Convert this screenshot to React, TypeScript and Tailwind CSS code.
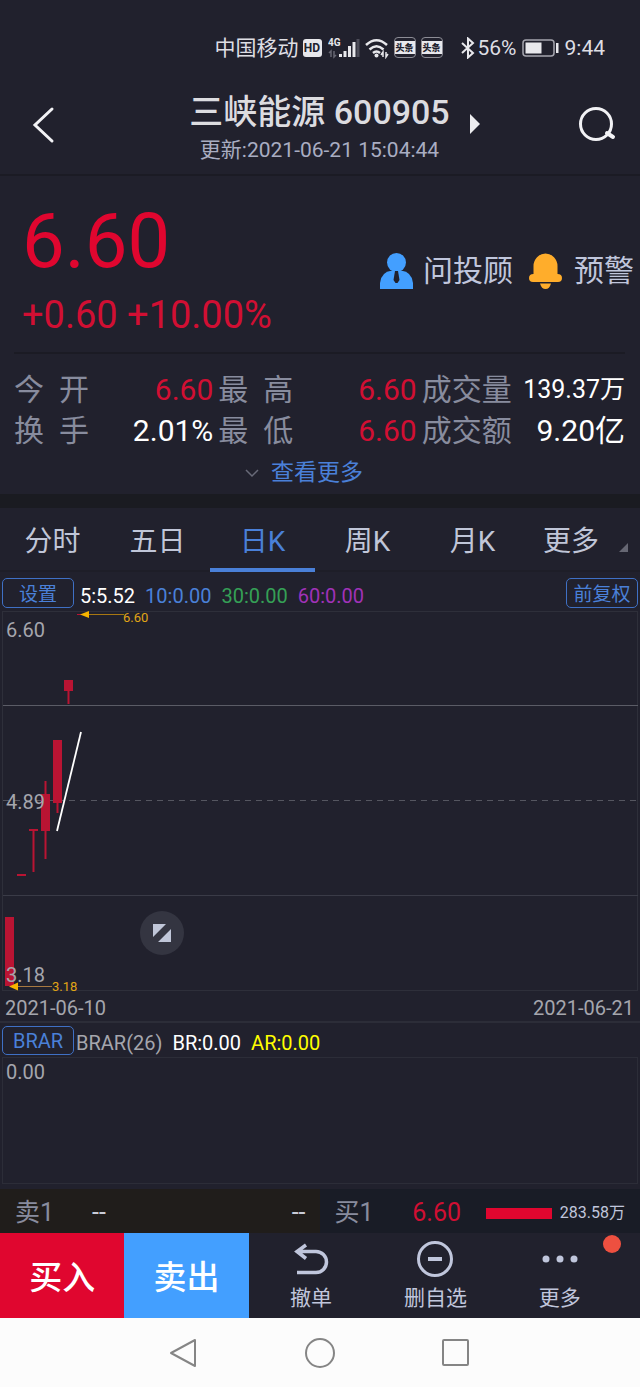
/**
 * Stock Detail Page
 *
 * Quote header, daily K-line chart and order bar for a single stock
 */

import { useState } from 'react';

const TABS = ['分时', '五日', '日K', '周K', '月K', '更多'];

const STATS = [
  { label: ['今', '开'], value: '6.60', color: 'text-[#d10f33]' },
  { label: ['最', '高'], value: '6.60', color: 'text-[#d10f33]' },
  { label: ['成', '交', '量'], value: '139.37万', color: 'text-white', small: true },
  { label: ['换', '手'], value: '2.01%', color: 'text-white' },
  { label: ['最', '低'], value: '6.60', color: 'text-[#d10f33]' },
  { label: ['成', '交', '额'], value: '9.20亿', color: 'text-white' },
];

// body and wick positions, top to bottom in chart pixels
const CANDLES = [
  { x: 5, top: 306, bottom: 375, high: 306, low: 375 },
  { x: 17, top: 263, bottom: 265, high: 263, low: 265 },
  { x: 29, top: 218, bottom: 220, high: 218, low: 261 },
  { x: 41, top: 183, bottom: 220, high: 170, low: 248 },
  { x: 53, top: 129, bottom: 192, high: 129, low: 202 },
  { x: 64, top: 69, bottom: 80, high: 69, low: 93 },
];

function StatusBar() {
  return (
    <div className="flex h-[94px] items-center justify-end pt-px pr-[35px] text-[21px] leading-6 text-[#dedee4]">
      <span>中国移动</span>
      <span className="ml-1 flex h-[18px] w-[19px] items-center justify-center rounded-[3px] bg-[#e8e8ec] text-[12px] font-bold text-[#21212d]">
        HD
      </span>
      <svg className="ml-[6px]" width="32" height="22" viewBox="0 0 32 22" aria-hidden="true">
        <text x="0" y="9" fontSize="10" fontWeight="700" fill="#e8e8ec">
          4G
        </text>
        <path d="M3 20v-6l-2 2M6 14v6l2-2" stroke="#666672" strokeWidth="1.5" fill="none" />
        <path d="M12.500 20v-3M17 20v-6M21.500 20v-11M26 20V5" stroke="#e8e8ec" strokeWidth="3" />
        <path d="M30 20V2" stroke="#4d4d59" strokeWidth="3" />
      </svg>
      <svg className="ml-[5px]" width="24" height="22" viewBox="0 0 24 22" fill="none" stroke="#e8e8ec" strokeWidth="2.500" aria-hidden="true">
        <path d="M1 8q10.500-9.500 21 0M4.500 12.500q7-6.500 14 0M8 16q3.500-3 7 0" />
        <circle cx="11.500" cy="18.500" r="2" fill="#e8e8ec" stroke="none" />
        <path d="M18 20v-5l-2 3M21 15v5l2-3" strokeWidth="1.500" />
      </svg>
      {[0, 1].map((i) => (
        <span
          key={i}
          className="ml-[5px] flex h-[21px] w-[22px] items-center justify-center rounded-[4px] border border-[#8d8d96]"
        >
          <span className="flex h-[13px] w-5 items-center justify-center bg-[#e8e8ec] text-[9px] leading-3 font-black text-[#21212d]">
            头条
          </span>
        </span>
      ))}
      <svg className="ml-[18px]" width="14" height="22" viewBox="0 0 14 22" fill="none" stroke="#e8e8ec" strokeWidth="2" aria-hidden="true">
        <path d="M1 6l11 10-5 4.500V1.500L12 6 1 16" />
      </svg>
      <span className="ml-[3px]">56%</span>
      <svg className="ml-[5px]" width="37" height="20" viewBox="0 0 37 20" aria-hidden="true">
        <rect x="1" y="2" width="31" height="16" rx="3" fill="none" stroke="#a5a5ae" strokeWidth="1.500" />
        <rect x="3.500" y="4.500" width="16" height="11" fill="#e8e8ec" />
        <rect x="34" y="5" width="2.500" height="10" fill="#e8e8ec" />
      </svg>
      <span className="ml-[6px]">9:44</span>
    </div>
  );
}

function Header() {
  return (
    <header className="flex h-[82px] items-start justify-between border-b-2 border-[#1b1b24]">
      <button type="button" aria-label="返回" className="mt-3 ml-8">
        <svg width="24" height="38" viewBox="0 0 24 38" fill="none" stroke="#f2f2f5" strokeWidth="3">
          <path d="M20 3L3 19l17 16" strokeLinecap="round" />
        </svg>
      </button>
      <div className="flex items-center gap-5 pl-[35px]">
        <div className="text-center">
          <h1 className="text-[34px] leading-9 font-medium text-[#dcdce0]">三峡能源 600905</h1>
          <p className="mt-2 text-[21px] leading-6 text-[#a9adc2]">更新:2021-06-21 15:04:44</p>
        </div>
        <button type="button" aria-label="下一只" className="-mt-2">
          <svg width="10" height="20" viewBox="0 0 10 20" fill="#ededf0">
            <path d="M0 0l10 10L0 20z" />
          </svg>
        </button>
      </div>
      <button type="button" aria-label="搜索" className="mt-3 mr-6">
        <svg width="38" height="38" viewBox="0 0 38 38" fill="none" stroke="#f2f2f5" strokeWidth="3">
          <circle cx="18" cy="18" r="15.500" />
          <path d="M29 27l6 4" strokeWidth="4" strokeLinecap="round" />
        </svg>
      </button>
    </header>
  );
}

function Quote() {
  return (
    <section>
      <div className="flex h-44 justify-between">
        <div className="pl-[22px] text-[#e0062f]">
          <p className="mt-[25px] text-[76px] leading-[80px]">6.60</p>
          <p className="mt-3 text-[38px] leading-[44px] text-[#d10f33]">+0.60 +10.00%</p>
        </div>
        <div className="mt-[14px] flex items-center self-center pr-[6px] text-[30px] leading-9 text-[#c0c6dc]">
          <button type="button" className="flex items-center gap-[10px]">
            <svg width="33" height="36" viewBox="0 0 33 36" fill="#439fff" aria-hidden="true">
              <circle cx="16.500" cy="9.500" r="9.500" />
              <path d="M0 36V30Q1 19 12 17.500h9Q32 19 33 30v6z" />
              <path d="M15 18h3l1.500 9-2 3h-2l-2-3z" fill="#21212d" />
            </svg>
            问投顾
          </button>
          <button type="button" className="ml-4 flex items-center gap-3">
            <svg width="33" height="36" viewBox="0 0 33 36" fill="#ffad2b" aria-hidden="true">
              <path d="M4.500 21V13a12 12.500 0 0 1 24 0v8q4.500 0 4.500 4t-4 4H4q-4 0-4-4t4.500-4z" />
              <path d="M11 30.500h11q-1.500 5.500-5.500 5.500T11 30.500z" />
            </svg>
            预警
          </button>
        </div>
      </div>
      <dl className="mr-[15px] ml-[14px] grid grid-cols-[199fr_198fr_203fr] gap-x-[5px] border-t-2 border-[#1b1b24] pt-[15px]">
        {STATS.map((stat) => (
          <div key={stat.label.join('')} className="flex h-[41px] items-center justify-between">
            <dt
              className={
                stat.label.length === 2
                  ? 'flex w-[75px] justify-between text-[30px] leading-9 text-[#888c9e]'
                  : 'flex text-[30px] leading-9 text-[#888c9e]'
              }
            >
              {stat.label.map((char) => (
                <span key={char}>{char}</span>
              ))}
            </dt>
            <dd className={`${stat.small ? 'text-[25px]' : 'text-[30px]'} leading-9 ${stat.color}`}>
              {stat.value}
            </dd>
          </div>
        ))}
      </dl>
      <button type="button" className="mx-auto flex h-[43px] items-center gap-3 pt-px pr-8 text-[23px] leading-7 text-[#4a80d8]">
        <svg width="14" height="9" viewBox="0 0 14 9" fill="none" stroke="#686a78" strokeWidth="1.500" aria-hidden="true">
          <path d="M1 1l6 6 6-6" />
        </svg>
        查看更多
      </button>
    </section>
  );
}

function KLineChart() {
  return (
    <div className="relative mx-[2px] h-[380px] border border-[#2e2f3a] text-[20px] leading-6 text-[#a5a6ad]">
      <svg className="absolute -top-px -left-[3px] h-[380px] w-[calc(100%+4px)] overflow-visible" aria-hidden="true">
        <line x1="3" x2="100%" y1="94.500" y2="94.500" stroke="#5b5c66" />
        <line x1="3" x2="100%" y1="189.500" y2="189.500" stroke="#555660" strokeDasharray="6 5" />
        <line x1="3" x2="100%" y1="284.500" y2="284.500" stroke="#3a3b47" />
        {CANDLES.map((c) => (
          <g key={c.x} fill="#b91433">
            <rect x={c.x} y={c.top} width="9" height={c.bottom - c.top} />
            <rect x={c.x + 3.5} y={c.high} width="2" height={c.low - c.high} />
          </g>
        ))}
        <path d="M57 220L81 121" stroke="#fff" strokeWidth="1.800" />
        <path d="M77 3.500h6" stroke="#b91433" />
        <path d="M86 3.500h38" stroke="#a87812" />
        <path d="M80 3.500l9-3.500v7z" fill="#f7b500" />
        <path d="M14 375.500h38" stroke="#a87840" />
        <path d="M9 375.500l9-4v8z" fill="#f7b500" />
      </svg>
      <span className="absolute top-[6px] left-[3px]">6.60</span>
      <span className="absolute top-[178px] left-[3px]">4.89</span>
      <span className="absolute top-[351px] left-[3px]">3.18</span>
      <span className="absolute top-[-2px] left-[120px] text-[13px] leading-4 text-[#e0a516]">6.60</span>
      <span className="absolute top-[367px] left-[49px] text-[13px] leading-4 text-[#e0a516]">3.18</span>
      <button
        type="button"
        aria-label="全屏"
        className="absolute top-[299px] left-[137px] flex h-11 w-11 items-center justify-center rounded-full bg-[#343541]"
      >
        <svg width="18" height="18" viewBox="0 0 18 18" fill="#c0c6d8">
          <path d="M0 0h13L0 13zM18 5v13H5z" />
        </svg>
      </button>
    </div>
  );
}

function OrderBook() {
  return (
    <div className="flex h-11 text-[25px] leading-8 text-[#888c9e]">
      <div className="flex flex-1 items-center bg-[#201d1b] pt-1 pr-[14px] pl-[15px]">
        <span>卖1</span>
        <span className="ml-[38px] text-[#c9ccd8]">--</span>
        <span className="ml-auto text-[#c9ccd8]">--</span>
      </div>
      <div className="flex flex-1 items-center justify-between bg-[#191c26] pt-1 pr-[15px] pl-[15px]">
        <span>买1</span>
        <span className="ml-[14px] text-[#d10f33]">6.60</span>
        <span className="flex items-center gap-2">
          <span className="h-[11px] w-[66px] bg-[#e0062f]" />
          <span className="text-[16px] text-[#c0c6dc]">283.58万</span>
        </span>
      </div>
    </div>
  );
}

function ActionBar() {
  return (
    <div className="relative grid h-[85px] grid-cols-5 pr-[18px] text-[21px] leading-7 text-[#c0c6dc]">
      <button type="button" className="bg-[#e0062f] pt-1 text-[33px] font-medium text-white">
        买入
      </button>
      <button type="button" className="bg-[#439fff] pt-1 text-[33px] font-medium text-white">
        卖出
      </button>
      <button type="button" className="flex flex-col items-center justify-end gap-1 pb-[6px]">
        <svg width="36" height="38" viewBox="0 0 36 38" fill="none" stroke="#c0c6dc" strokeWidth="3.500">
          <path d="M13 3L4 9.500l9 7M4 9.500h19a10.500 10.500 0 0 1 0 21H4" />
        </svg>
        撤单
      </button>
      <button type="button" className="flex flex-col items-center justify-end gap-1 pb-[6px]">
        <svg width="38" height="40" viewBox="0 0 38 40" fill="none" stroke="#c0c6dc" strokeWidth="3">
          <circle cx="19" cy="19" r="16.500" />
          <path d="M12 19h14" strokeWidth="4" />
        </svg>
        删自选
      </button>
      <button type="button" className="flex flex-col items-center justify-end gap-1 pb-[6px]">
        <svg width="38" height="40" viewBox="0 0 38 40" fill="#c0c6dc">
          <circle cx="5" cy="19" r="3.500" />
          <circle cx="19" cy="19" r="3.500" />
          <circle cx="33" cy="19" r="3.500" />
        </svg>
        更多
      </button>
      <span className="absolute top-[2px] right-[19px] h-[18px] w-[18px] rounded-full bg-[#ee5040]" />
    </div>
  );
}

function SystemNav() {
  return (
    <nav className="flex h-[69px] items-center justify-center gap-[106px] bg-[#fcfcfc] pr-[2px]">
      <button type="button" aria-label="后退">
        <svg width="30" height="32" viewBox="0 0 30 32" fill="none" stroke="#858585" strokeWidth="2">
          <path d="M27 3v26L3 16z" strokeLinejoin="round" />
        </svg>
      </button>
      <button type="button" aria-label="主页">
        <svg width="32" height="32" viewBox="0 0 32 32" fill="none" stroke="#858585" strokeWidth="2">
          <circle cx="16" cy="16" r="14" />
        </svg>
      </button>
      <button type="button" aria-label="最近任务">
        <svg width="28" height="28" viewBox="0 0 28 28" fill="none" stroke="#858585" strokeWidth="2">
          <rect x="1" y="1" width="25" height="25" rx="1" />
        </svg>
      </button>
    </nav>
  );
}

export default function App() {
  const [tab, setTab] = useState('日K');

  return (
    <div className="min-h-screen bg-[#21212d] font-['Roboto','Noto_Sans_CJK_SC',sans-serif]">
      <StatusBar />
      <Header />
      <Quote />

      <div className="h-[14px] bg-[#1a1b21]" />

      <div className="grid h-16 grid-cols-[105fr_105fr_105fr_105fr_105fr_115fr] text-[28px] leading-9">
        {TABS.map((name) => (
          <button
            key={name}
            type="button"
            onClick={() => setTab(name)}
            className={
              name === tab
                ? 'border-b-4 border-[#4a80d8] pt-2 text-[#4a80d8]'
                : 'border-b-2 border-[#1e1e28] pt-[6px] text-[#c0c6d8]'
            }
          >
            {name === '更多' ? (
              <span className="flex items-end justify-end gap-5 pr-3">
                {name}
                <svg className="mb-2" width="9" height="9" viewBox="0 0 9 9" fill="#666773">
                  <path d="M9 0v9H0z" />
                </svg>
              </span>
            ) : (
              name
            )}
          </button>
        ))}
      </div>

      <div className="flex h-[39px] items-center px-[2px] pb-px text-[20px] leading-6">
        <button type="button" className="mt-1 h-[30px] w-[72px] rounded-[5px] border border-[#3f70c4] pt-[3px] text-[19px] text-[#4a80d8]">
          设置
        </button>
        <div className="ml-[6px] flex gap-[10px] pt-[9px]">
          <span className="text-white">5:5.52</span>
          <span className="text-[#4a80d8]">10:0.00</span>
          <span className="text-[#35a056]">30:0.00</span>
          <span className="text-[#a032b8]">60:0.00</span>
        </div>
        <button type="button" className="mt-1 ml-auto h-[30px] w-[72px] rounded-[5px] border border-[#3f70c4] pt-[3px] text-[19px] text-[#4a80d8]">
          前复权
        </button>
      </div>
      <KLineChart />
      <div className="flex h-8 items-center justify-between border-b-2 border-[#2c2d38] pt-[3px] pr-[6px] pl-[5px] text-[20px] leading-6 text-[#a5a6ad]">
        <span>2021-06-10</span>
        <span>2021-06-21</span>
      </div>
      <div className="flex h-[34px] items-center px-[2px] text-[20px] leading-6">
        <button type="button" className="h-[29px] w-[72px] rounded-[5px] border border-[#3f70c4] pt-px text-[#4a80d8]">
          BRAR
        </button>
        <div className="ml-[2px] flex gap-[10px] pt-[6px]">
          <span className="text-[#a5a6ad]">BRAR(26)</span>
          <span className="text-white">BR:0.00</span>
          <span className="text-[#ffff00]">AR:0.00</span>
        </div>
      </div>
      <div className="mx-[2px] mb-[5px] h-[127px] border border-[#2c2d38] pt-[2px] pl-[3px] text-[20px] leading-6 text-[#a5a6ad]">
        0.00
      </div>

      <OrderBook />
      <ActionBar />
      <SystemNav />
    </div>
  );
}
